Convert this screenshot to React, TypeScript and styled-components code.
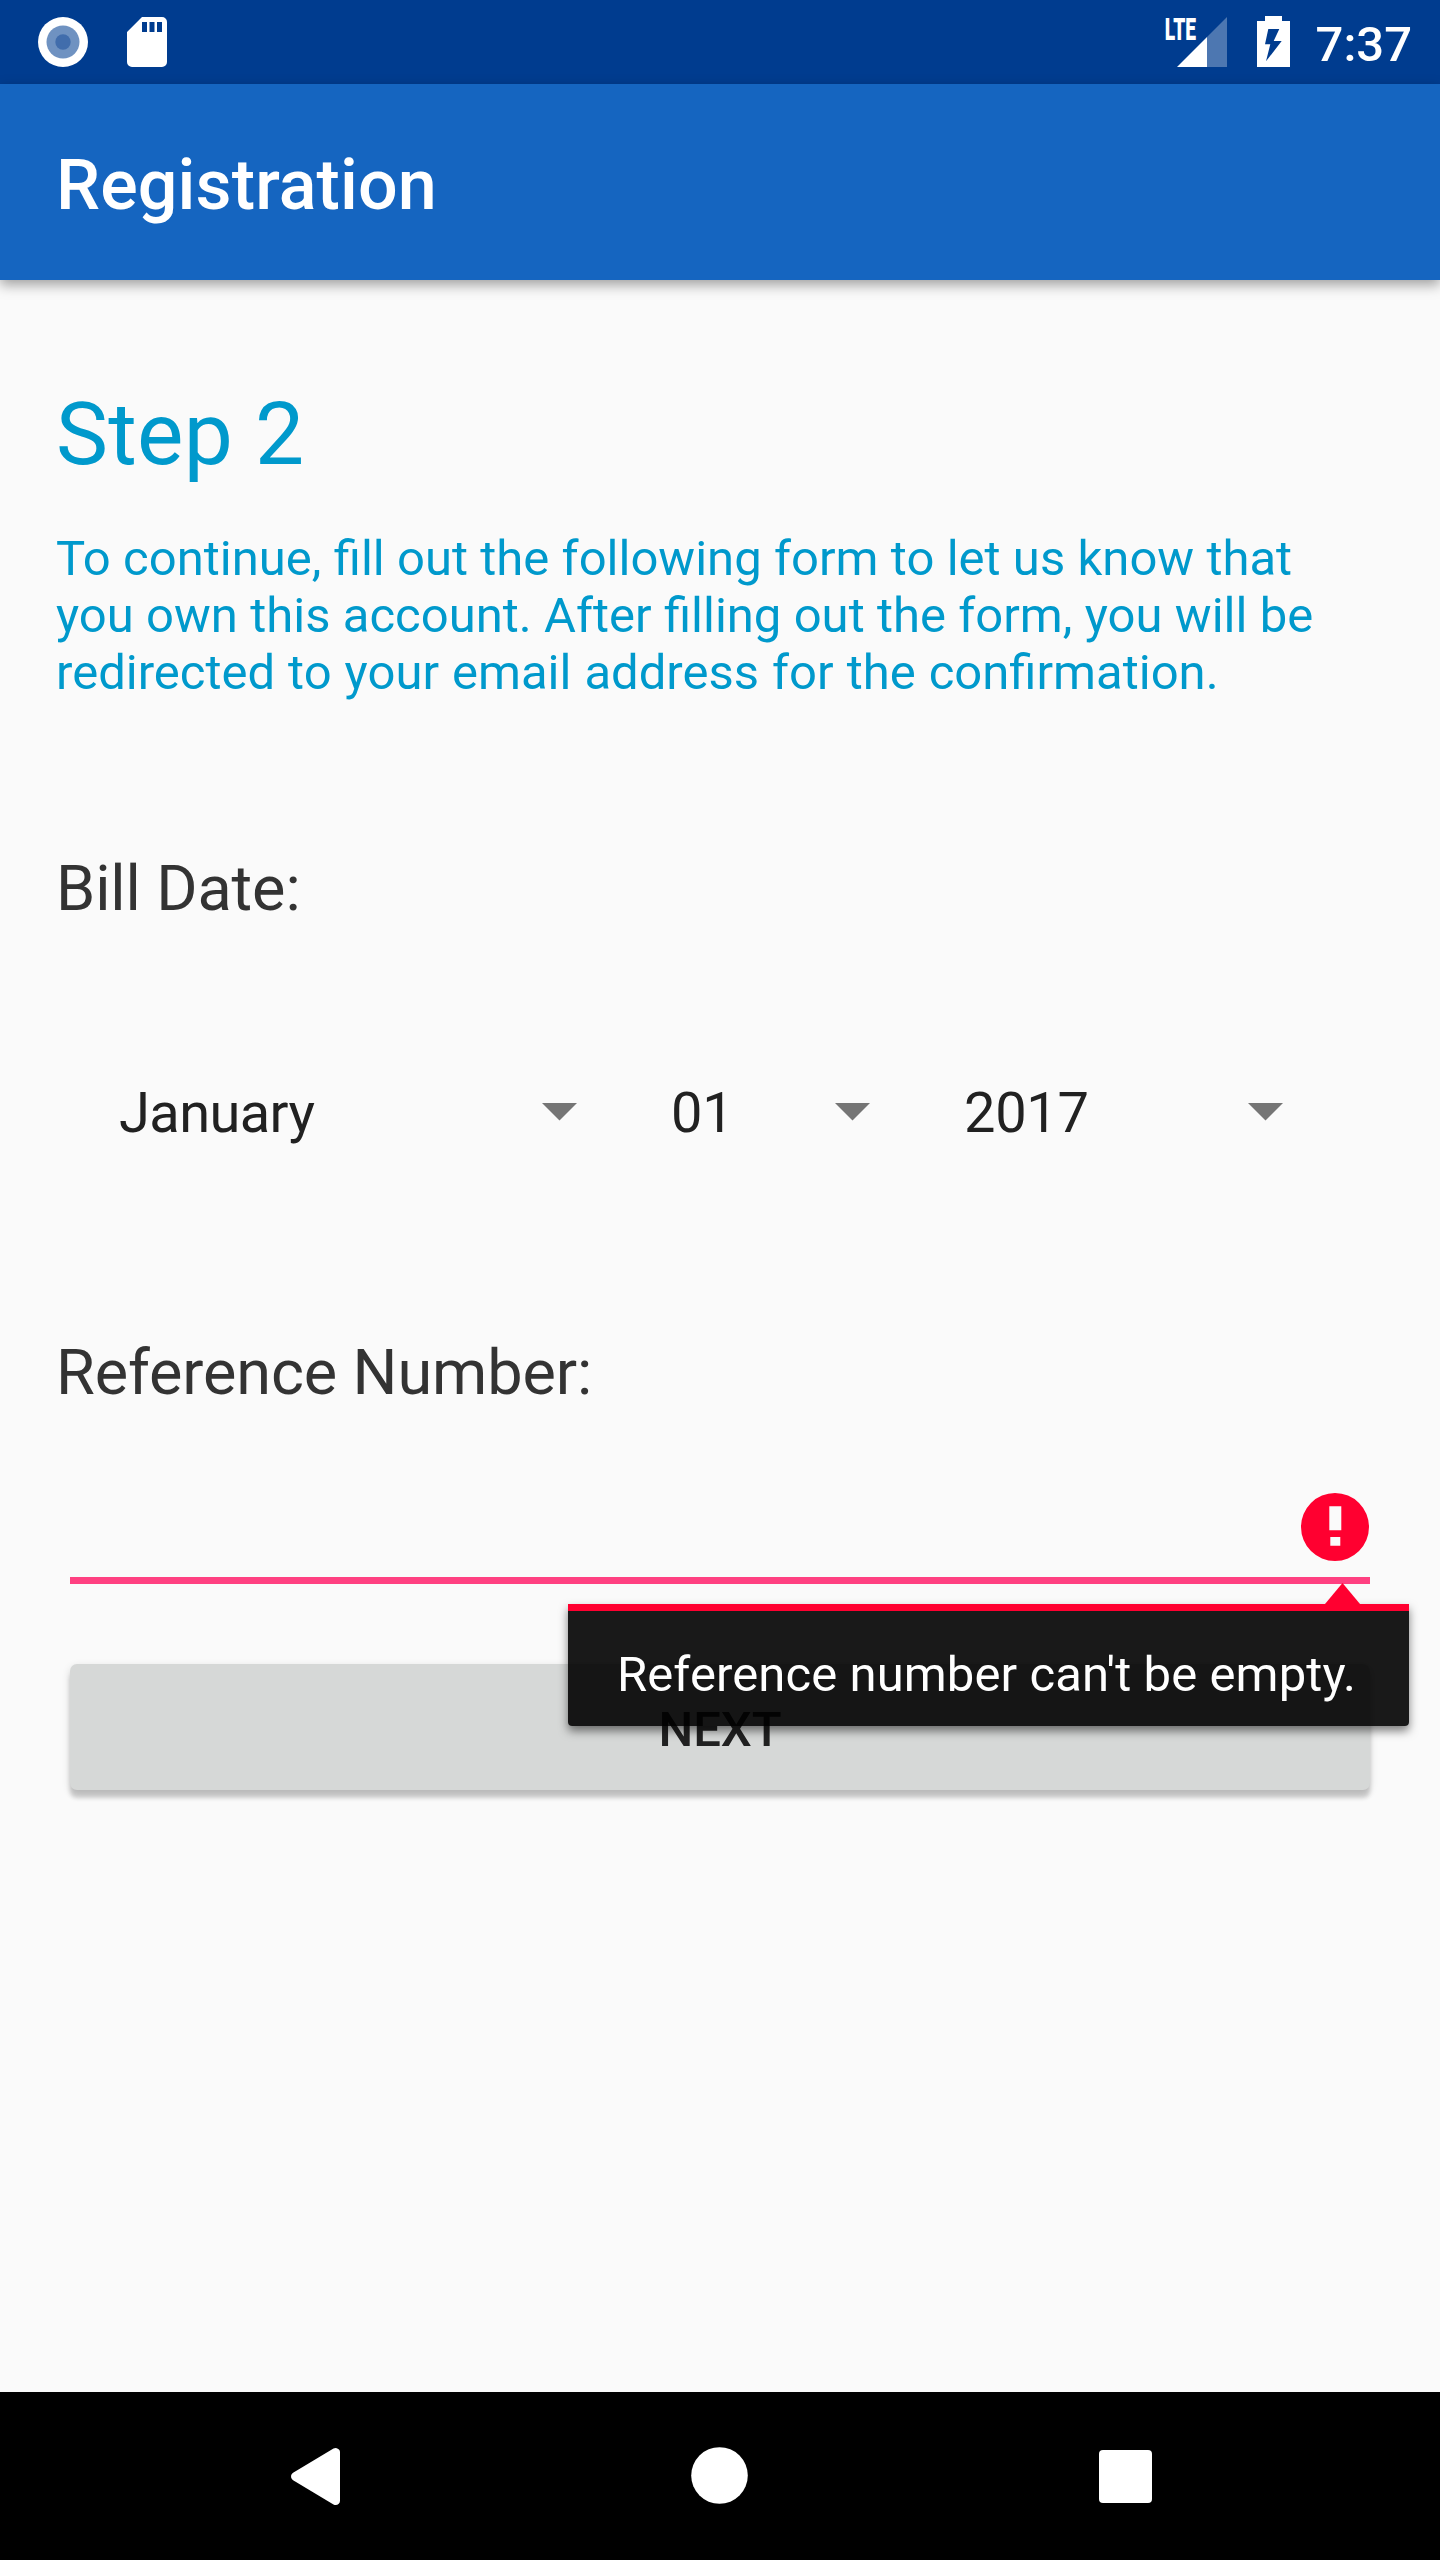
import React from "react";
import styled, { createGlobalStyle } from "styled-components";

const GlobalStyle = createGlobalStyle`
  * { box-sizing: border-box; }
  body { margin: 0; background: #fafafa; font-family: Roboto, "Noto Sans", sans-serif; }
  svg { display: block; flex: none; }
`;

const Screen = styled.div`
  width: 1440px;
  height: 2560px;
  display: flex;
  flex-direction: column;
  background: #fafafa;
  overflow: hidden;
`;

const StatusBar = styled.header`
  height: 84px;
  flex: none;
  display: flex;
  justify-content: space-between;
  background: #003c8f;
  padding: 0 28px 0 38px;
`;

const StatusGroup = styled.div<{ $gap: number }>`
  display: flex;
  align-items: center;
  gap: ${(p) => p.$gap}px;
`;

const Clock = styled.span`
  margin-left: -4px;
  font-size: 49px;
  font-weight: 500;
  line-height: 57px;
  color: #fff;
  padding-top: 4px;
`;

const Toolbar = styled.div`
  height: 196px;
  flex: none;
  display: flex;
  align-items: center;
  padding: 6px 56px 0;
  background: #1565c0;
  box-shadow: 0 5px 12px rgba(0, 0, 0, 0.36);
`;

const Title = styled.h1`
  margin: 0;
  font-size: 70px;
  font-weight: 500;
  line-height: 82px;
  letter-spacing: 0.12px;
  color: #fff;
`;

const Content = styled.main`
  flex: 1;
  display: flex;
  flex-direction: column;
  padding: 103px 56px 0;
`;

const StepHeading = styled.h2`
  margin: 0;
  font-size: 87.5px;
  font-weight: 400;
  line-height: 102px;
  letter-spacing: 0.25px;
  color: #0099cc;
`;

const Intro = styled.p`
  margin: 45px 0 0;
  font-size: 49px;
  line-height: 57px;
  color: #0099cc;
`;

const IntroLine = styled.span<{ $wordSpacing: number }>`
  display: block;
  word-spacing: ${(p) => p.$wordSpacing}px;
`;

const Label = styled.label<{ $top: number }>`
  margin-top: ${(p) => p.$top}px;
  font-size: 63px;
  line-height: 74px;
  letter-spacing: -0.12px;
  color: #333;
`;

const SpinnerRow = styled.div`
  display: flex;
  height: 84px;
  margin-top: 145px;
`;

const Spinner = styled.div<{ $width: number; $inset: number; $tracking: number }>`
  width: ${(p) => p.$width}px;
  display: flex;
  align-items: center;
  justify-content: space-between;
  padding: 0 25px 0 ${(p) => p.$inset}px;
  font-size: 56px;
  line-height: 66px;
  letter-spacing: ${(p) => p.$tracking}px;
  color: #212121;
`;

const Field = styled.div`
  position: relative;
  height: 116px;
  margin: 58px 14px 0;
  border-bottom: 7px solid #ff4081;
  display: flex;
  justify-content: flex-end;
  padding: 25px 1px 0 0;
`;

const ErrorPopup = styled.div`
  position: absolute;
  z-index: 1;
  top: 136px;
  right: -39px;
  width: 841px;
  height: 122px;
  padding: 35px 0 0 49px;
  border-top: 7px solid #ff0030;
  border-radius: 0 0 4px 4px;
  background: rgba(0, 0, 0, 0.9);
  background-clip: padding-box;
  box-shadow: 0 5px 10px rgba(0, 0, 0, 0.5);
  font-size: 49px;
  line-height: 57px;
  letter-spacing: 0.09px;
  color: #fff;
  white-space: nowrap;
`;

const Pointer = styled.div`
  position: absolute;
  top: -28px;
  right: 49px;
  width: 35px;
  height: 21px;
  background: #ff0030;
  clip-path: polygon(50% 0, 100% 100%, 0 100%);
`;

const NextButton = styled.button`
  height: 126px;
  margin: 80px 14px 0;
  padding: 5px 0 0;
  border: 0;
  border-radius: 7px;
  background: #d6d8d7;
  box-shadow: 0 8px 4px rgba(0, 0, 0, 0.17), 0 3px 8px rgba(0, 0, 0, 0.14);
  font: 500 49px/57px Roboto, "Noto Sans", sans-serif;
  color: #212121;
`;

const NavBar = styled.nav`
  height: 168px;
  flex: none;
  display: flex;
  align-items: center;
  justify-content: space-between;
  padding: 0 280px;
  background: #000;
`;

const RecordIcon = () => (
  <svg width="50" height="50" viewBox="0 0 50 50">
    <circle cx="25" cy="25" r="25" fill="#fff" />
    <circle cx="25" cy="25" r="16.5" fill="#6f92c1" />
    <circle cx="25" cy="25" r="7.7" fill="#416dac" />
  </svg>
);

const SdCardIcon = () => (
  <svg width="40" height="50" viewBox="0 0 40 50">
    <path
      fill="#fff"
      fillRule="evenodd"
      d="M15 0H35a5 5 0 0 1 5 5V45a5 5 0 0 1-5 5H5a5 5 0 0 1-5-5V15ZM15 5V15H20V5ZM22.5 5V15H27.5V5ZM30 5V15H35V5Z"
    />
  </svg>
);

const SignalIcon = () => (
  <svg width="62" height="74" viewBox="0 -12 62 74">
    <path d="M42 20L62 0V50H42Z" fill="#4d77b1" />
    <path d="M12 50L42 20V50Z" fill="#fff" />
    <text
      transform="translate(-0.3 22.6) scale(0.63 1)"
      fontFamily="Roboto, sans-serif"
      fontSize="30.5"
      fontWeight="900"
      fill="#fff"
    >
      LTE
    </text>
  </svg>
);

const BatteryIcon = () => (
  <svg width="33" height="52" viewBox="0 0 33 52">
    <path
      fill="#fff"
      fillRule="evenodd"
      d="M8 0H25V5H33V51H0V5H8ZM11.3 13H22.3L16.7 25H24.7L9 45.3L13.3 28.3H8Z"
    />
  </svg>
);

const Caret = () => (
  <svg width="35" height="20" viewBox="0 0 35 20">
    <path d="M0 0H35L17.5 17.5Z" fill="#757575" />
  </svg>
);

const ErrorIcon = () => (
  <svg width="68" height="68" viewBox="0 0 68 68">
    <path
      fill="#ff0030"
      fillRule="evenodd"
      d="M34 0a34 34 0 1 1 0 68a34 34 0 1 1 0-68ZM28.3 13.3V37.3H40.3V13.3ZM29.3 44V52.7H39.3V44Z"
    />
  </svg>
);

const BackIcon = () => (
  <svg width="70" height="70" viewBox="0 0 70 70">
    <path
      fill="#fff"
      stroke="#fff"
      strokeWidth="8.6"
      strokeLinejoin="round"
      d="M15.3 35.5L55.7 11.3V59.7Z"
    />
  </svg>
);

const HomeIcon = () => (
  <svg width="70" height="70" viewBox="0 0 70 70">
    <circle cx="34.5" cy="34.5" r="28.3" fill="#fff" />
  </svg>
);

const RecentsIcon = () => (
  <svg width="70" height="70" viewBox="0 0 70 70">
    <rect x="9" y="9" width="53" height="53" rx="4" fill="#fff" />
  </svg>
);

export default function App() {
  return (
    <Screen>
      <GlobalStyle />
      <StatusBar>
        <StatusGroup $gap={39}>
          <RecordIcon />
          <SdCardIcon />
        </StatusGroup>
        <StatusGroup $gap={30}>
          <SignalIcon />
          <BatteryIcon />
          <Clock>7:37</Clock>
        </StatusGroup>
      </StatusBar>
      <Toolbar>
        <Title>Registration</Title>
      </Toolbar>
      <Content>
        <StepHeading>Step 2</StepHeading>
        <Intro>
          <IntroLine $wordSpacing={0.15}>
            To continue, fill out the following form to let us know that
          </IntroLine>
          <IntroLine $wordSpacing={0.15}>
            you own this account. After filling out the form, you will be
          </IntroLine>
          <IntroLine $wordSpacing={0.85}>
            redirected to your email address for the confirmation.
          </IntroLine>
        </Intro>
        <Label $top={151}>Bill Date:</Label>
        <SpinnerRow>
          <Spinner $width={546} $inset={63} $tracking={-0.6}>
            January
            <Caret />
          </Spinner>
          <Spinner $width={293} $inset={69} $tracking={-0.2}>
            01
            <Caret />
          </Spinner>
          <Spinner $width={413} $inset={69} $tracking={-0.3}>
            2017
            <Caret />
          </Spinner>
        </SpinnerRow>
        <Label $top={181}>Reference Number:</Label>
        <Field>
          <ErrorIcon />
          <ErrorPopup>
            <Pointer />
            Reference number can't be empty.
          </ErrorPopup>
        </Field>
        <NextButton>NEXT</NextButton>
      </Content>
      <NavBar>
        <BackIcon />
        <HomeIcon />
        <RecentsIcon />
      </NavBar>
    </Screen>
  );
}
